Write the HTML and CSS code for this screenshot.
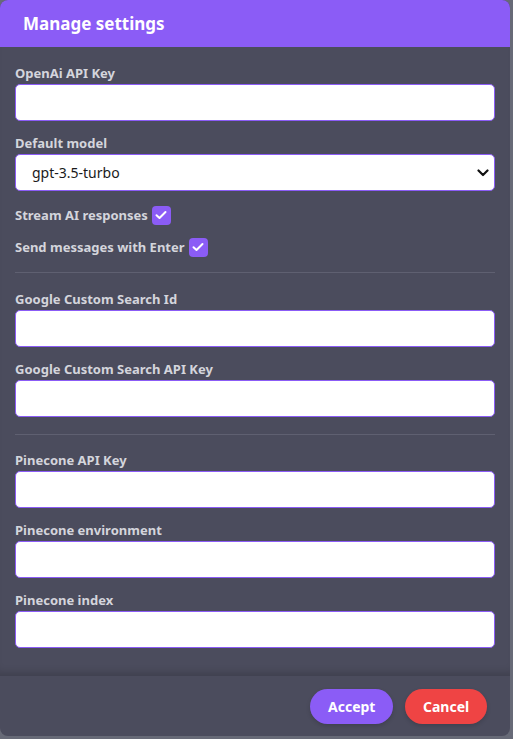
FILE: index.html
```html
<!DOCTYPE html>
<html lang="en">
<head>
<meta charset="utf-8">
<title>Manage settings</title>
<link rel="stylesheet" href="styles.css">
</head>
<body>
<div class="modal">
  <div class="modal-header">
    <h2 class="modal-title">Manage settings</h2>
  </div>
  <div class="modal-body">
    <div class="field">
      <label class="field-label">OpenAi API Key</label>
      <input class="text-input" type="text">
    </div>
    <div class="field">
      <label class="field-label">Default model</label>
      <div class="select-wrap">
        <select class="select-input">
          <option>gpt-3.5-turbo</option>
        </select>
        <svg class="select-arrow" width="12" height="8" viewBox="0 0 12 8"><path d="M1.5 1.5 L6 6 L10.5 1.5" fill="none" stroke="#111" stroke-width="2.2" stroke-linecap="round" stroke-linejoin="round"/></svg>
      </div>
    </div>
    <div class="check-row first">
      <span class="check-label">Stream AI responses</span>
      <span class="checkbox"><svg width="12" height="10" viewBox="0 0 12 10"><path d="M1.5 5.2 L4.5 8 L10.5 2" fill="none" stroke="#fff" stroke-width="2" stroke-linecap="round" stroke-linejoin="round"/></svg></span>
    </div>
    <div class="check-row">
      <span class="check-label">Send messages with Enter</span>
      <span class="checkbox"><svg width="12" height="10" viewBox="0 0 12 10"><path d="M1.5 5.2 L4.5 8 L10.5 2" fill="none" stroke="#fff" stroke-width="2" stroke-linecap="round" stroke-linejoin="round"/></svg></span>
    </div>
    <hr class="divider divider-a">
    <div class="field">
      <label class="field-label">Google Custom Search Id</label>
      <input class="text-input" type="text">
    </div>
    <div class="field">
      <label class="field-label">Google Custom Search API Key</label>
      <input class="text-input" type="text">
    </div>
    <hr class="divider divider-b">
    <div class="field">
      <label class="field-label">Pinecone API Key</label>
      <input class="text-input" type="text">
    </div>
    <div class="field">
      <label class="field-label">Pinecone environment</label>
      <input class="text-input" type="text">
    </div>
    <div class="field">
      <label class="field-label">Pinecone index</label>
      <input class="text-input" type="text">
    </div>
  </div>
  <div class="modal-footer">
    <button class="btn btn-accept">Accept</button>
    <button class="btn btn-cancel">Cancel</button>
  </div>
</div>
</body>
</html>
```

FILE: styles.css
```css
* { box-sizing: border-box; }
html, body { margin: 0; padding: 0; }
body {
  background: #676a77;
  font-family: "Noto Sans", "Open Sans", sans-serif;
  width: 513px;
  height: 739px;
  overflow: hidden;
}
.modal {
  width: 510px;
  height: 736px;
  border-radius: 8px;
  overflow: hidden;
  background: #4b4c5d;
  display: flex;
  flex-direction: column;
}
.modal-header {
  height: 47px;
  flex: none;
  background: #8b5cf6;
  display: flex;
  align-items: center;
  padding: 0 23px;
}
.modal-title {
  margin: 0;
  color: #fff;
  font-size: 17px;
  font-weight: 700;
  line-height: 22px;
}
.modal-body {
  flex: 1;
  padding: 16px 15px 0;
  box-shadow: inset 0 -9px 8px -6px rgba(0,0,0,0.18);
}
.field {
  display: flex;
  flex-direction: column;
  margin-bottom: 12px;
}
.field-label {
  color: #d4d5dc;
  font-size: 13px;
  font-weight: 700;
  line-height: 20px;
  margin-bottom: 1px;
}
.text-input, .select-input {
  width: 480px;
  height: 37px;
  border: 1.5px solid #8b5cf6;
  border-radius: 5px;
  background: #fff;
  outline: none;
  font-family: inherit;
}
.select-wrap { position: relative; width: 480px; }
.select-input {
  appearance: none;
  -webkit-appearance: none;
  padding: 0 16px;
  font-size: 14px;
  color: #1a1a1a;
}
.select-arrow {
  position: absolute;
  right: 6px;
  top: 15px;
}
.check-row {
  height: 22px;
  display: flex;
  align-items: center;
  gap: 4px;
  margin-top: 10px;
}
.check-row.first { margin-top: 13px; }
.check-label {
  color: #d4d5dc;
  font-size: 13px;
  font-weight: 700;
}
.checkbox {
  width: 19px;
  height: 19px;
  border-radius: 4px;
  background: #8b5cf6;
  display: flex;
  align-items: center;
  justify-content: center;
}
.divider {
  border: none;
  height: 1px;
  background: #5f6071;
  margin: 0;
}
.divider-a { margin-top: 14px; margin-bottom: 16px; }
.divider-b { margin-top: 17px; margin-bottom: 15px; }
.modal-footer {
  height: 60px;
  flex: none;
  display: flex;
  justify-content: flex-end;
  align-items: center;
  gap: 12px;
  padding: 0 23px;
}
.btn {
  height: 35px;
  border: none;
  border-radius: 18px;
  color: #fff;
  font-family: inherit;
  font-size: 14px;
  font-weight: 700;
  padding: 0 18px;
  width: 83px;
  box-shadow: 0 2px 4px rgba(0,0,0,0.15);
}
.btn-accept { background: #8b5cf6; }
.btn-cancel { background: #ef4444; width: 82px; }
```
